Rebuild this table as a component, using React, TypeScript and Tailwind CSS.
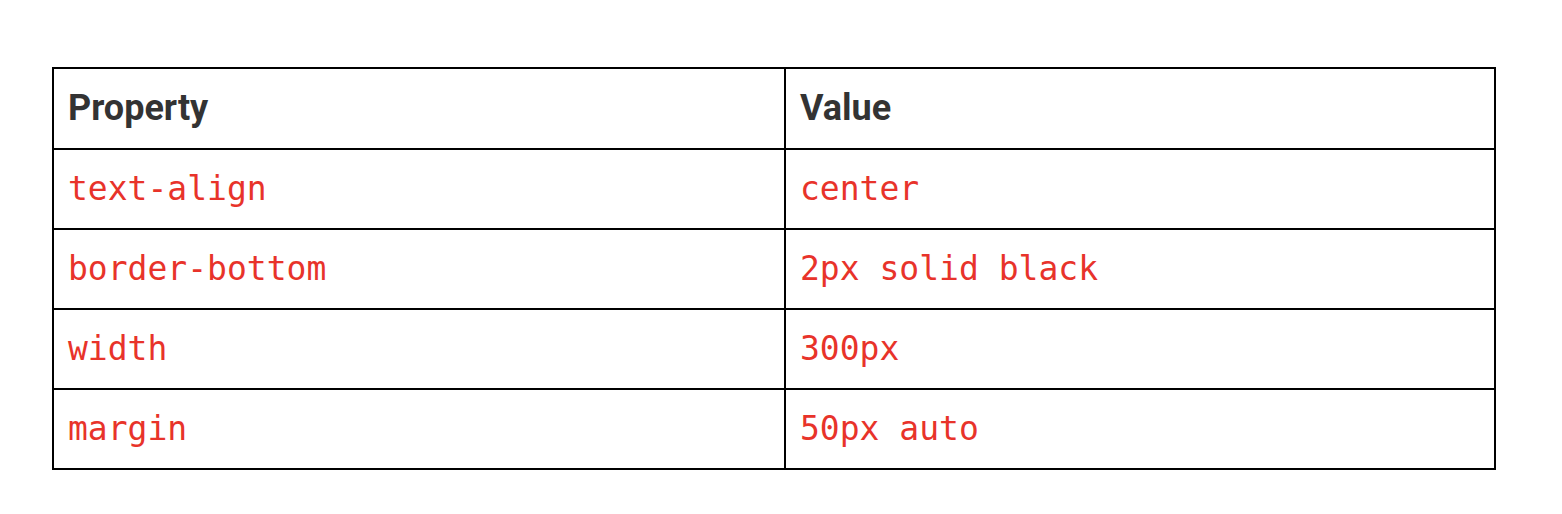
import React from "react";

const rows: [string, string][] = [
  ["text-align", "center"],
  ["border-bottom", "2px solid black"],
  ["width", "300px"],
  ["margin", "50px auto"],
];

export default function App() {
  return (
    <div className="w-[1562px] h-[514px] bg-white pt-[67px] pl-[52px]">
      <div className="w-[1444px] border-2 border-black">
        <div className="flex h-[79px]">
          <div className="w-[732px] border-r-2 border-black flex items-center pl-[14px] pb-[2px] font-['Roboto',sans-serif] font-bold text-[36px] text-[#333333]">
            Property
          </div>
          <div className="flex-1 flex items-center pl-[14px] pb-[2px] font-['Roboto',sans-serif] font-bold text-[36px] text-[#333333]">
            Value
          </div>
        </div>
        {rows.map(([p, v]) => (
          <div key={p} className="flex h-[80px] border-t-2 border-black">
            <div className="w-[732px] border-r-2 border-black flex items-center pl-[14px] font-['DejaVu_Sans_Mono',monospace] text-[33px] text-[#e8332a]">
              {p}
            </div>
            <div className="flex-1 flex items-center pl-[14px] font-['DejaVu_Sans_Mono',monospace] text-[33px] text-[#e8332a]">
              {v}
            </div>
          </div>
        ))}
      </div>
    </div>
  );
}
